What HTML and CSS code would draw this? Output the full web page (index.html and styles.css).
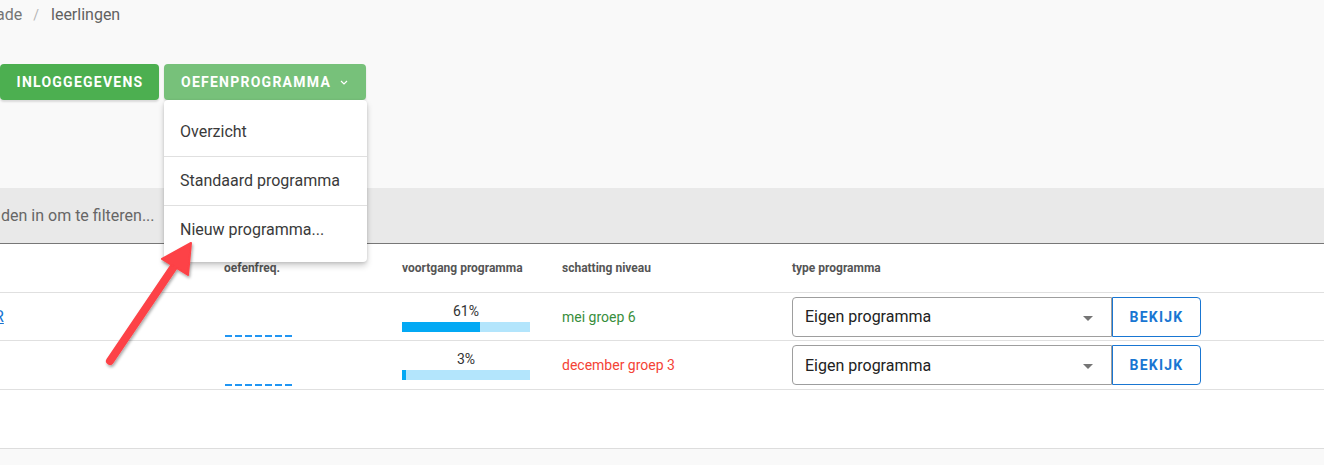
FILE: index.html
```html
<!DOCTYPE html>
<html lang="nl">
<head>
<meta charset="utf-8">
<title>Leerlingen</title>
<link rel="stylesheet" href="styles.css">
</head>
<body>
<div class="page">
  <nav class="crumbs">
    <span class="crumb first">ade</span>
    <span class="sep">/</span>
    <span class="crumb">leerlingen</span>
  </nav>

  <div class="actions">
    <button class="btn btn-green">Inloggegevens</button>
    <div class="menu-wrap">
      <button class="btn btn-green-light">Oefenprogramma
        <svg class="chev" width="8" height="5" viewBox="0 0 8 5"><path d="M1 1l3 3 3-3" fill="none" stroke="#fff" stroke-width="1.2"/></svg>
      </button>
      <ul class="menu">
        <li>Overzicht</li>
        <li>Standaard programma</li>
        <li>Nieuw programma...</li>
      </ul>
    </div>
  </div>

  <div class="filter"><span class="filter-text">den in om te filteren...</span></div>

  <section class="table">
    <div class="row head">
      <div></div>
      <div class="th">oefenfreq.</div>
      <div class="th">voortgang programma</div>
      <div class="th">schatting niveau</div>
      <div class="th">type programma</div>
    </div>
    <div class="row r1">
      <div class="name"><a href="#">R</a></div>
      <div class="freq"><span class="dash"></span></div>
      <div class="prog">
        <span class="pct">61%</span>
        <div class="bar"><div class="fill" style="width:61%"></div></div>
      </div>
      <div class="level good">mei groep 6</div>
      <div class="type">
        <div class="select">Eigen programma<span class="caret"></span></div>
        <button class="btn-outline">Bekijk</button>
      </div>
    </div>
    <div class="row r2">
      <div class="name"></div>
      <div class="freq"><span class="dash"></span></div>
      <div class="prog">
        <span class="pct">3%</span>
        <div class="bar"><div class="fill" style="width:3%"></div></div>
      </div>
      <div class="level bad">december groep 3</div>
      <div class="type">
        <div class="select">Eigen programma<span class="caret"></span></div>
        <button class="btn-outline">Bekijk</button>
      </div>
    </div>
    <div class="table-rest"></div>
  </section>

  <svg class="arrow" width="1324" height="465" viewBox="0 0 1324 465">
    <defs>
      <filter id="sh" x="-20%" y="-20%" width="140%" height="140%">
        <feDropShadow dx="1" dy="2" stdDeviation="1.5" flood-color="#000" flood-opacity="0.35"/>
      </filter>
    </defs>
    <g filter="url(#sh)">
      <line x1="110" y1="361" x2="177" y2="262" stroke="#fd4246" stroke-width="8" stroke-linecap="round"/>
      <polygon points="191,243 162,259 188,275" fill="#fd4246" stroke="#fd4246" stroke-width="2" stroke-linejoin="round"/>
    </g>
  </svg>
</div>
</body>
</html>
```

FILE: styles.css
```css
* { box-sizing: border-box; }
html, body { margin: 0; padding: 0; }
body {
  background: #f9f9f9;
  font-family: Roboto, "Liberation Sans", sans-serif;
  color: #333;
  width: 1324px;
  height: 465px;
  overflow: hidden;
}
.page { position: relative; }

.crumbs {
  display: flex;
  align-items: center;
  padding-top: 3px;
  height: 27px;
  font-size: 16px;
  line-height: 24px;
  color: #616161;
}
.crumb.first { margin-left: -4px; color: #757575; }
.sep { color: #b5b5b5; margin: 0 12px 0 11px; font-size: 14px; }

.actions {
  display: flex;
  gap: 5px;
  margin-top: 37px;
  height: 36px;
}
.btn {
  height: 36px;
  border: none;
  border-radius: 4px;
  color: #fff;
  font-family: Roboto, "Liberation Sans", sans-serif;
  font-size: 14px;
  font-weight: 700;
  letter-spacing: 1.25px;
  text-transform: uppercase;
  padding: 0 16px;
  box-shadow: 0 2px 2px rgba(0,0,0,0.12);
  display: flex;
  align-items: center;
}
.btn-green { background: #4caf50; width: 159px; justify-content: center; padding-left: 17px; }
.btn-green-light { background: #77c17a; width: 202px; gap: 8px; padding-left: 17px; }
.chev { margin-left: 1px; }

.menu-wrap { position: relative; }
.menu {
  position: absolute;
  left: 0;
  top: 36px;
  width: 203px;
  margin: 0;
  padding: 8px 0;
  list-style: none;
  background: #fff;
  border-radius: 4px;
  box-shadow: 0 4px 6px rgba(0,0,0,0.18), 0 1px 3px rgba(0,0,0,0.12);
  z-index: 5;
}
.menu li {
  height: 48px;
  line-height: 48px;
  padding-left: 16px;
  font-size: 16px;
  color: #3a3a3a;
}
.menu li + li { border-top: 1px solid #e0e0e0; height: 49px; }

.filter {
  margin-top: 88px;
  height: 56px;
  background: #e9e9e9;
  border-bottom: 1px solid #777;
  display: flex;
  align-items: center;
  padding-left: 1px;
  padding-bottom: 1px;
}
.filter-text { font-size: 16px; color: #666; }

.table { background: #fff; }
.row {
  display: grid;
  grid-template-columns: 224px 178px 160px 230px 1fr;
  height: 49px;
  border-bottom: 1px solid #e0e0e0;
  align-items: center;
}
.row.r1 { height: 48px; }
.row.r2 { height: 49px; }
.th { font-size: 12px; font-weight: 700; color: #555; }

.name a {
  color: #1976d2;
  font-size: 16px;
  margin-left: -6px;
  text-decoration: underline;
}
.freq { padding-left: 1px; padding-bottom: 3px; height: 100%; display: flex; align-items: flex-end; }
.dash {
  display: block;
  width: 67px;
  height: 2px;
  background: repeating-linear-gradient(90deg, #2196f3 0 7px, transparent 7px 10px);
}
.prog { display: flex; flex-direction: column; width: 128px; align-items: center; padding-top: 1px; }
.pct { font-size: 14px; line-height: 16px; color: #333; margin-bottom: 3px; }
.bar { width: 128px; height: 10px; background: #b3e5fc; }
.fill { height: 100%; background: #03a9f4; }

.level { font-size: 14px; }
.level.good { color: #388e3c; }
.level.bad { color: #f44336; }

.type { display: flex; height: 40px; }
.select {
  width: 320px;
  height: 40px;
  border: 1px solid #9e9e9e;
  border-radius: 4px 0 0 4px;
  display: flex;
  align-items: center;
  padding-left: 12px;
  font-size: 16px;
  color: #222;
  position: relative;
}
.caret {
  position: absolute;
  right: 18px;
  top: 18px;
  width: 0; height: 0;
  border-left: 5px solid transparent;
  border-right: 5px solid transparent;
  border-top: 5px solid #757575;
}
.btn-outline {
  width: 89px;
  height: 40px;
  background: #fff;
  border: 1px solid #1976d2;
  border-radius: 0 4px 4px 0;
  color: #1976d2;
  font-family: Roboto, "Liberation Sans", sans-serif;
  font-size: 14px;
  font-weight: 700;
  letter-spacing: 1.25px;
  text-transform: uppercase;
  padding: 0;
}
.table-rest { height: 59px; border-bottom: 1px solid #ddd; }

.arrow { position: absolute; left: 0; top: 0; pointer-events: none; z-index: 10; }
```
